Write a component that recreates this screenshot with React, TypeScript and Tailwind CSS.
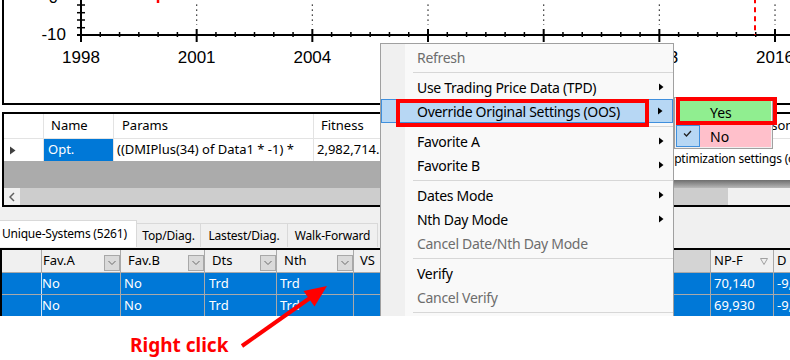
import React from "react";

const YEARS = [1998, 2001, 2004, 2007, 2010, 2013, 2016];
const X0 = 81;
const STEP = 115.67;

type MenuEntry =
  | { label: string; disabled?: boolean; sub?: boolean; active?: boolean }
  | "sep";

const MENU: MenuEntry[] = [
  { label: "Refresh", disabled: true },
  "sep",
  { label: "Use Trading Price Data (TPD)", sub: true },
  { label: "Override Original Settings (OOS)", sub: true, active: true },
  "sep",
  { label: "Favorite A", sub: true },
  { label: "Favorite B", sub: true },
  "sep",
  { label: "Dates Mode", sub: true },
  { label: "Nth Day Mode", sub: true },
  { label: "Cancel Date/Nth Day Mode", disabled: true },
  "sep",
  { label: "Verify" },
  { label: "Cancel Verify", disabled: true },
  "sep",
];

const Chart = () => {
  const minor: number[] = [];
  for (let k = 0; k < 7; k++) {
    for (let m = 1; m < 6; m++) minor.push(X0 + k * STEP + (m * STEP) / 6);
  }

  return (
    <div className="ml-[2px] h-[105px] border-b-2 border-l-2 border-black">
      <svg
        width="786"
        height="103"
        viewBox="4 0 786 103"
        className="block font-['Liberation_Sans',Arial,sans-serif]">
        <line x1={81} y1={0} x2={81} y2={42} stroke="#000" strokeWidth={2} />
        <line x1={77} y1={35} x2={790} y2={35} stroke="#000" strokeWidth={2} />
        {[5, 12.7, 20, 27.7].map(y => (
          <line key={y} x1={77} y1={y} x2={85} y2={y} stroke="#000" strokeWidth={1.5} />
        ))}
        {minor.map(x => (
          <line key={x} x1={x} y1={32} x2={x} y2={37} stroke="#000" strokeWidth={1.5} />
        ))}
        {YEARS.map((year, i) => {
          const x = X0 + i * STEP;
          return (
            <g key={year}>
              {i > 0 && (
                <>
                  <line x1={x} y1={29} x2={x} y2={42} stroke="#000" strokeWidth={2} />
                  <line
                    x1={x}
                    y1={4.5}
                    x2={x}
                    y2={25}
                    stroke="#000"
                    strokeWidth={1.2}
                    strokeDasharray="1.2 3.8"
                  />
                </>
              )}
              <text x={x} y={62.5} textAnchor="middle" fontSize={17} fill="#000">
                {year}
              </text>
            </g>
          );
        })}
        <line
          x1={755}
          y1={-1.7}
          x2={755}
          y2={35}
          stroke="#f00"
          strokeWidth={2}
          strokeDasharray="5 4"
        />
        <line x1={158} y1={0} x2={158} y2={3} stroke="#f00" strokeWidth={2.5} />
        <text x={58} y={3.3} textAnchor="end" fontSize={17} fill="#000">
          0
        </text>
        <text x={66} y={39.5} textAnchor="end" fontSize={17} fill="#000">
          -10
        </text>
      </svg>
    </div>
  );
};

const TopGrid = () => {
  return (
    <div className="ml-[2px] mt-[7px] h-[95px] w-[900px] border-2 border-black bg-white text-[13px] text-black">
      <div className="flex h-[25px] border-b border-[#e3e3e3]">
        <div className="w-[40px] shrink-0 border-r border-[#e3e3e3]" />
        <div className="flex w-[70px] shrink-0 items-center border-r border-[#e3e3e3] pl-[7px]">Name</div>
        <div className="flex w-[200px] shrink-0 items-center border-r border-[#e3e3e3] pl-[8px]">Params</div>
        <div className="flex w-[120px] shrink-0 items-center border-r border-[#e3e3e3] pl-[7px]">Fitness</div>
        <div className="flex w-[100px] shrink-0 items-center border-r border-[#e3e3e3] pl-[7px]">NP</div>
        <div className="flex w-[100px] shrink-0 items-center border-r border-[#e3e3e3] pl-[7px]">Trades</div>
        <div className="flex w-[82px] shrink-0 items-center border-r border-[#e3e3e3] pl-[7px]">Settings</div>
        <div className="flex flex-1 items-center whitespace-nowrap pl-[3px]">Comparison</div>
      </div>

      <div className="flex h-[49px]">
        <div className="flex w-[655px] shrink-0 flex-col">
          <div className="flex h-[22px]">
            <div className="flex w-[40px] shrink-0 items-center border-r border-[#e3e3e3] pl-[6px]">
              <svg width="6" height="9" viewBox="0 0 6 9">
                <path d="M0 0.5 L5.5 4.5 L0 8.5Z" fill="#404040" />
              </svg>
            </div>
            <div className="flex w-[70px] shrink-0 items-center border-r border-[#e3e3e3] bg-[#0078d7] pl-[4px] text-white">
              Opt.
            </div>
            <div className="flex w-[200px] shrink-0 items-center overflow-hidden whitespace-nowrap border-r border-[#e3e3e3] pl-[3px]">
              ((DMIPlus(34) of Data1 * -1) *
            </div>
            <div className="flex w-[120px] shrink-0 items-center overflow-hidden whitespace-nowrap border-r border-[#e3e3e3] pl-[3px]">
              2,982,714.55
            </div>
          </div>
          <div className="flex-1 bg-[#ababab]" />
        </div>
        <div className="flex min-w-0 flex-1 flex-col">
          <div className="h-[41px] whitespace-nowrap pl-[6px] pt-[11px] text-[12px] tracking-[-0.2px]">
            Optimization settings (original)
          </div>
          <div className="flex-1 bg-gradient-to-b from-[#6e6e6e] to-[#b8b8b8]" />
        </div>
      </div>

      <div className="flex h-[17px] bg-[#f0f0f0]">
        <div className="flex w-[16px] shrink-0 items-center justify-center">
          <svg width="6" height="10" viewBox="0 0 6 10">
            <path d="M5 1 L1 5 L5 9" fill="none" stroke="#606060" strokeWidth={1.5} />
          </svg>
        </div>
        <div className="w-[708px] shrink-0 bg-[#cdcdcd]" />
      </div>
    </div>
  );
};

const Tabs = () => {
  const others = ["Top/Diag.", "Lastest/Diag.", "Walk-Forward"];
  const widths = ["w-[64px]", "w-[87px]", "w-[90px]"];

  return (
    <div className="flex h-[41px] items-end bg-[#f0f0f0] pb-[1px] text-[12px] tracking-[-0.2px] text-black">
      <div className="flex h-[27px] w-[137px] shrink-0 items-center whitespace-nowrap border-r border-t border-[#d9d9d9] bg-white pl-[2px]">
        Unique-Systems (5261)
      </div>
      {others.map((tab, i) => (
        <div
          key={tab}
          className={`flex h-[24px] shrink-0 items-center justify-center whitespace-nowrap border-r border-t border-[#d9d9d9] bg-[#f0f0f0] ${widths[i]}`}>
          {tab}
        </div>
      ))}
    </div>
  );
};

const DropButton = () => (
  <div className="mb-[1px] flex h-[16px] w-[16px] shrink-0 items-center justify-center border border-[#a8a8a8] bg-[#dadada]">
    <svg width="10" height="6" viewBox="0 0 10 6">
      <path d="M1.5 1 L5 4.5 L8.5 1" fill="none" stroke="#6b6b6b" strokeWidth={1} />
    </svg>
  </div>
);

const HeaderCell = ({
  label,
  width,
  pad = "pl-[7px]",
  drop = false,
  bg = "bg-[#f0f0f0]",
}: {
  label: string;
  width: string;
  pad?: string;
  drop?: boolean;
  bg?: string;
}) => (
  <div className={`flex shrink-0 items-end border-r border-[#a9a9a9] ${bg} ${width}`}>
    <div className={`flex h-full min-w-0 flex-1 items-center overflow-hidden whitespace-nowrap ${pad}`}>
      {label}
    </div>
    {drop && <DropButton />}
  </div>
);

const BottomGrid = () => {
  const rows = [
    ["No", "No", "Trd", "Trd", "70,140", "-9,512"],
    ["No", "No", "Trd", "Trd", "69,930", "-9,512"],
  ];
  const cell = "flex shrink-0 items-center border-r border-[#a9a9a9]";

  return (
    <div className="h-[69px] w-[900px] border-l-2 border-t-2 border-black bg-white text-[13px]">
      <div className="flex h-[23px] border-b border-[#a9a9a9] text-black">
        <div className="w-[40px] shrink-0 border-r border-[#a9a9a9] bg-[#f0f0f0]" />
        <HeaderCell label="Fav.A" width="w-[79px]" pad="pl-[1px]" drop />
        <HeaderCell label="Fav.B" width="w-[84px]" drop />
        <HeaderCell label="Dts" width="w-[72px]" drop />
        <HeaderCell label="Nth" width="w-[77px]" drop />
        <HeaderCell label="VS" width="w-[97px]" pad="pl-[6px]" />
        <HeaderCell label="Trades" width="w-[110px]" />
        <HeaderCell label="Avg" width="w-[80px]" />
        <HeaderCell label="NP" width="w-[70px]" bg="bg-[#d4d4d4]" />
        <div className="flex w-[63px] shrink-0 items-center border-r border-[#a9a9a9] bg-[#f0f0f0] pl-[3px]">
          <span className="flex-1">NP-F</span>
          <svg width="8" height="7" viewBox="0 0 8 7" className="mr-[5px]">
            <path d="M0.5 0.5 L7.5 0.5 L4 6.5Z" fill="none" stroke="#a0a0a0" strokeWidth={1} />
          </svg>
        </div>
        <div className="flex flex-1 items-center bg-[#f0f0f0] pl-[3px]">D</div>
      </div>
      {rows.map((row, r) => (
        <div key={r} className="flex h-[22px] border-b border-[#a9a9a9] bg-[#0078d7] text-white">
          <div className="w-[40px] shrink-0 border-r border-[#cfe3f5]" />
          <div className={`${cell} w-[79px]`}>{row[0]}</div>
          <div className={`${cell} w-[84px] pl-[3px]`}>{row[1]}</div>
          <div className={`${cell} w-[72px] pl-[4px]`}>{row[2]}</div>
          <div className={`${cell} w-[77px] pl-[3px]`}>{row[3]}</div>
          <div className={`${cell} w-[97px]`} />
          <div className={`${cell} w-[110px]`} />
          <div className={`${cell} w-[80px]`} />
          <div className={`${cell} w-[70px]`} />
          <div className={`${cell} w-[63px] pl-[3px]`}>{row[4]}</div>
          <div className="flex flex-1 items-center whitespace-nowrap pl-[3px]">{row[5]}</div>
        </div>
      ))}
    </div>
  );
};

const SubArrow = () => (
  <svg width="5" height="8" viewBox="0 0 5 8" className="mr-[9px] shrink-0">
    <path d="M0 0.5 L4.5 4 L0 7.5Z" fill="#000" />
  </svg>
);

const ContextMenu = () => (
  <div className="absolute left-[380px] top-[43px] h-[290px] w-[294px] border border-[#a0a0a0] bg-[linear-gradient(to_right,#f0f0f0_0,#f0f0f0_24px,#f9f9f9_24px)] py-[1px] text-[14px] tracking-[-0.3px]">
    {MENU.map((item, i) =>
      item === "sep" ? (
        <div key={i} className="flex h-[6px] items-center pl-[32px]">
          <div className="h-px w-full bg-[#d7d7d7]" />
        </div>
      ) : (
        <div
          key={i}
          className={`flex h-[24px] items-center whitespace-nowrap ${
            item.active ? "border border-[#3f8fdd] bg-[#b7d7f4] pl-[35px]" : "pl-[36px]"
          } ${item.disabled ? "text-[#6d6d6d]" : "text-black"}`}>
          <span className="flex-1">{item.label}</span>
          {item.sub && <SubArrow />}
        </div>
      ),
    )}
  </div>
);

const SubMenu = () => (
  <div className="absolute left-[674px] top-[97px] w-[99px] border border-[#a0a0a0] bg-[#f0f0f0] p-[1px] text-[14px] text-black">
    <div className="flex h-[26px] items-center bg-[#90ee90] pl-[34px]">Yes</div>
    <div className="flex h-[22px]">
      <div className="w-[24px] border border-[#3f8fdd] bg-[#b7d7f4] pl-[6px] pt-[4px]">
        <svg width="9" height="7" viewBox="0 0 9 7" className="block">
          <path d="M1 3.5 L3.5 6 L8 1" fill="none" stroke="#222" strokeWidth={1.3} />
        </svg>
      </div>
      <div className="flex flex-1 items-center bg-[#ffc0cb] pl-[10px]">No</div>
    </div>
  </div>
);

export default function App() {
  return (
    <div className="relative h-[360px] w-[790px] overflow-hidden bg-white font-['Noto_Sans','Open_Sans',sans-serif]">
      <div className="relative h-[316px] overflow-hidden">
        <Chart />
        <TopGrid />
        <Tabs />
        <BottomGrid />
        <ContextMenu />
        <SubMenu />
        <div className="absolute left-[396px] top-[99px] h-[28px] w-[253px] border-4 border-[#ff0000]" />
        <div className="absolute left-[676px] top-[97px] h-[28px] w-[101px] border-4 border-[#ff0000]" />
      </div>
      <div className="h-[44px] pl-[130px] pt-[17px] text-[19px] font-bold leading-[1.362] text-[#ff0000]">
        Right click
      </div>
      <svg
        width="790"
        height="360"
        viewBox="0 0 790 360"
        className="pointer-events-none absolute left-0 top-0">
        <line x1={242} y1={346} x2={310} y2={298} stroke="#ff0000" strokeWidth={4} />
        <path d="M327 286 L303.5 291 L314.5 306.5Z" fill="#ff0000" />
      </svg>
    </div>
  );
}
